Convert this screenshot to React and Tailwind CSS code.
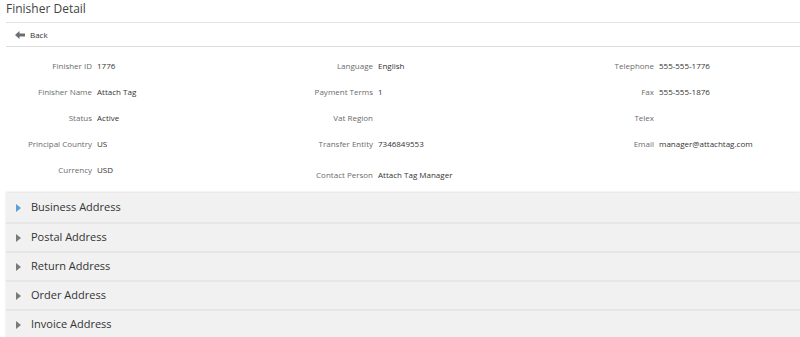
const cols = [
  [
    ['Finisher ID', '1776'],
    ['Finisher Name', 'Attach Tag'],
    ['Status', 'Active'],
    ['Principal Country', 'US'],
    ['Currency', 'USD'],
  ],
  [
    ['Language', 'English'],
    ['Payment Terms', '1'],
    ['Vat Region', ''],
    ['Transfer Entity', '7346849553'],
    ['Contact Person', 'Attach Tag Manager'],
  ],
  [
    ['Telephone', '555-555-1776'],
    ['Fax', '555-555-1876'],
    ['Telex', ''],
    ['Email', 'manager@attachtag.com'],
  ],
];

const sections = ['Business Address', 'Postal Address', 'Return Address', 'Order Address', 'Invoice Address'];

const Field = ({ label, value, extra }) => (
  <div className={`flex items-center h-[26px] ${extra || ''}`}>
    <div className="w-[86px] shrink-0 text-right text-[#6b6b6b]">{label}</div>
    <div className="pl-[5px] text-[#333]">{value}</div>
  </div>
);

const App = () => {
  return (
    <div className="w-[800px] h-[337px] overflow-hidden bg-white font-['Open_Sans',sans-serif]">
      <div className="pl-[6px]">
        <h1 className="h-[23px] pt-[1px] text-[12px] leading-[16px] text-[#444] border-b border-[#e3e3e3]">Finisher Detail</h1>
        <div className="h-[24px] flex items-center pl-[9px] gap-[5px] text-[8px] text-[#333] border-b border-[#dcdcdc]">
          <svg width="10" height="8" viewBox="0 0 10 8">
            <path d="M0 4 L4.5 0 V2.5 H10 V5.5 H4.5 V8 Z" fill="#6e6e6e" />
          </svg>
          <span>Back</span>
        </div>
      </div>

      <div className="flex pl-[6px] pt-[6px] text-[8px] h-[144px]">
        {cols.map((col, i) => (
          <div key={i} className="w-[281px] shrink-0 flex flex-col">
            {col.map(([l, v], j) => (
              <Field key={l} label={l} value={v} extra={i === 1 && j === 4 ? 'mt-[5px]' : ''} />
            ))}
          </div>
        ))}
      </div>

      <div className="ml-[6px] mt-[2px] bg-[#f1f1f1] shadow-[0_-1px_2px_rgba(0,0,0,0.12)]">
        {sections.map((s, i) => (
          <div
            key={s}
            className={`h-[29px] flex items-center pl-[10px] gap-[10px] text-[11px] text-[#333] ${i > 0 ? 'border-t-2 border-[#e6e6e6]' : ''}`}
          >
            <svg width="5" height="8" viewBox="0 0 5 8">
              <path d="M0 0 L5 4 L0 8 Z" fill={i === 0 ? '#5b9fd6' : '#7a7a7a'} />
            </svg>
            <span>{s}</span>
          </div>
        ))}
      </div>
    </div>
  );
};

export default App;
